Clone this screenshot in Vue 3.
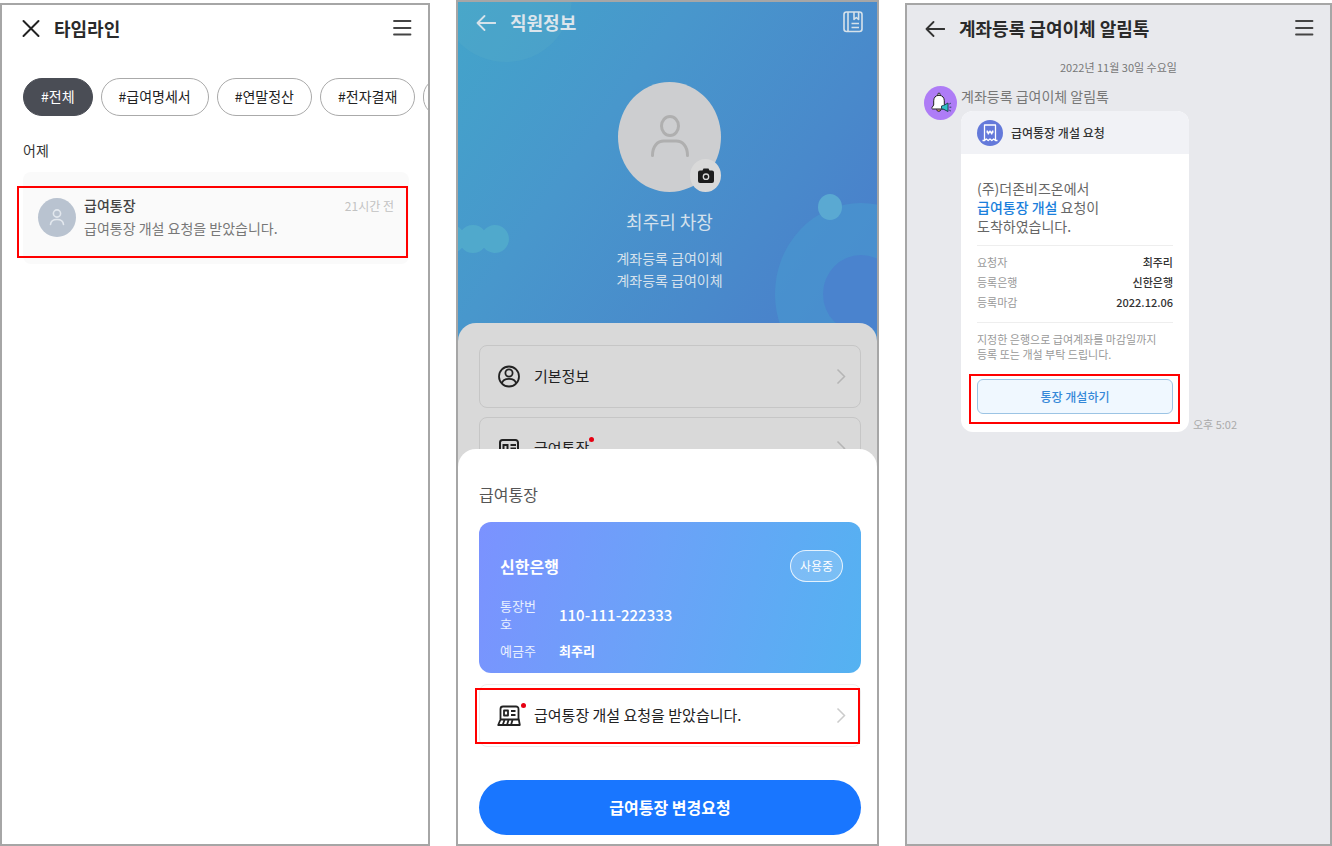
<script setup>
import { ref } from 'vue';

const tags = ['#전체', '#급여명세서', '#연말정산', '#전자결재'];
const activeTag = ref('#전체');

const departments = ['계좌등록 급여이체', '계좌등록 급여이체'];

const requestInfo = [
  { label: '요청자', value: '최주리' },
  { label: '등록은행', value: '신한은행' },
  { label: '등록마감', value: '2022.12.06' }
];

function selectTag(tag) {
  activeTag.value = tag;
}
</script>

<template>
  <div class="screens">
    <!-- 타임라인 -->
    <section class="screen">
      <header class="top-bar">
        <button class="icon-button" aria-label="닫기">
          <svg width="20" height="20" viewBox="0 0 20 20" fill="none" stroke="#222" stroke-width="2" stroke-linecap="round">
            <path d="M3.500 3 18.500 18M18.500 3 3.500 18" />
          </svg>
        </button>
        <h1>타임라인</h1>
        <button class="icon-button" aria-label="메뉴">
          <svg width="20" height="20" viewBox="0 0 20 20" fill="none" stroke="#444" stroke-width="1.800" stroke-linecap="round">
            <path d="M2 3h16.500M2 10h16.500M2 16.500h16.500" />
          </svg>
        </button>
      </header>

      <nav class="tags">
        <button
          v-for="tag in tags"
          :key="tag"
          class="tag"
          :class="{ active: tag === activeTag }"
          @click="selectTag(tag)"
        >{{ tag }}</button>
        <button class="tag" aria-label="더보기"></button>
      </nav>

      <h2 class="day">어제</h2>

      <article class="notice">
        <span class="notice-avatar">
          <svg width="18" height="20" viewBox="0 0 18 20" fill="none" stroke="#e3e8ee" stroke-width="1.6" stroke-linecap="round">
            <circle cx="9" cy="6.500" r="3.600" />
            <path d="M2.500 17.500c.3-3.800 3-5 6.500-5s6.200 1.200 6.500 5" />
          </svg>
        </span>
        <div class="notice-text">
          <strong>급여통장</strong>
          <p>급여통장 개설 요청을 받았습니다.</p>
        </div>
        <time>21시간 전</time>
        <span class="mark notice-mark"></span>
      </article>
    </section>

    <!-- 직원정보 -->
    <section class="screen employee">
      <div class="hero">
        <svg class="hero-art" viewBox="0 0 419 341" preserveAspectRatio="xMidYMin slice">
          <circle cx="48" cy="-6" r="66" fill="#5cb0c8" opacity=".25" />
          <path d="M-7 223a14 14 0 0 1 11 5.300 14 14 0 0 1 22 0 14 14 0 1 1 0 17.400 14 14 0 0 1-22 0 14 14 0 0 1-11 5.300z" fill="#50a9cc" />
          <ellipse cx="403" cy="292" rx="86" ry="91" fill="#4896cf" opacity=".7" />
          <ellipse cx="403" cy="292" rx="38" ry="39" fill="#4a83ce" />
          <ellipse cx="372" cy="205" rx="12" ry="13" fill="#5aa9d2" />
        </svg>

        <header class="top-bar">
          <button class="icon-button" aria-label="뒤로">
            <svg width="20" height="20" viewBox="0 0 20 20" fill="none" stroke="#d6e2ea" stroke-width="1.800" stroke-linecap="round" stroke-linejoin="round">
              <path d="M8.500 4 1.500 11l7 7M1.500 11h18" />
            </svg>
          </button>
          <h1>직원정보</h1>
          <button class="icon-button" aria-label="수첩">
            <svg width="20" height="22" viewBox="0 0 20 22" fill="none" stroke="#d6e2ea" stroke-width="1.600" stroke-linejoin="round">
              <rect x="1" y="1" width="18" height="19.500" rx="2.500" />
              <path d="M5 1v19.500M11 1v7.500l2.300-2 2.300 2V1M8.500 12.500h7.500M8.500 16.500h7.500" />
            </svg>
          </button>
        </header>

        <div class="profile">
          <div class="photo">
            <svg width="42" height="44" viewBox="0 0 42 44" fill="none" stroke="#afafaf" stroke-width="3" stroke-linecap="round">
              <ellipse cx="21" cy="11" rx="8.500" ry="9.500" />
              <path d="M3.500 40.500C3.500 31 8.500 26 15 26h12c6.500 0 11.500 5 11.500 14.500" />
            </svg>
            <button class="camera" aria-label="사진 변경">
              <svg width="18" height="16" viewBox="0 0 18 16">
                <path d="M3 2.500h2.500L6.500.5h5l1 2H15a2 2 0 0 1 2 2V13a2 2 0 0 1-2 2H3a2 2 0 0 1-2-2V4.500a2 2 0 0 1 2-2z" fill="#1d1d1d" />
                <circle cx="9" cy="8.700" r="2.700" fill="none" stroke="#d9d9d9" stroke-width="1.300" />
              </svg>
            </button>
          </div>
          <p class="name">최주리 차장</p>
          <p v-for="(dept, i) in departments" :key="i" class="dept">{{ dept }}</p>
        </div>
      </div>

      <div class="menu-sheet">
        <button class="menu-row">
          <svg class="row-icon" width="24" height="24" viewBox="0 0 24 24" fill="none" stroke="#222" stroke-width="1.800">
            <circle cx="12" cy="12.500" r="10" />
            <circle cx="12" cy="9" r="3.600" />
            <path d="M4.800 19.500c.8-3.300 3.400-4.600 7.200-4.600s6.400 1.300 7.200 4.600" />
          </svg>
          <span>기본정보</span>
          <svg class="chevron" width="10" height="16" viewBox="0 0 10 16" fill="none" stroke="#b5b5b5" stroke-width="1.500">
            <path d="m1.500 1.500 7 7-7 7" />
          </svg>
        </button>
        <button class="menu-row">
          <svg class="row-icon" width="24" height="24" viewBox="0 0 24 24" fill="none" stroke="#222" stroke-width="2">
            <path d="M3 21V6.500A2.500 2.500 0 0 1 5.500 4h13A2.500 2.500 0 0 1 21 6.500V21" />
            <path d="M6.500 9h4v5h-4zM13.500 9H19M13.500 12.500H19" />
          </svg>
          <span class="dotted">급여통장<i class="dot"></i></span>
          <svg class="chevron" width="10" height="16" viewBox="0 0 10 16" fill="none" stroke="#b5b5b5" stroke-width="1.500">
            <path d="m1.500 1.500 7 7-7 7" />
          </svg>
        </button>
      </div>

      <div class="account-sheet">
        <h2>급여통장</h2>
        <div class="bank-card">
          <div class="bank-head">
            <strong>신한은행</strong>
            <span class="status">사용중</span>
          </div>
          <dl>
            <dt>통장번호</dt>
            <dd class="number">110-111-222333</dd>
            <dt>예금주</dt>
            <dd>최주리</dd>
          </dl>
        </div>

        <button class="menu-row request">
          <span class="row-icon dotted">
            <svg width="24" height="24" viewBox="0 0 24 24" fill="none" stroke="#222" stroke-width="1.800" stroke-linejoin="round">
              <path d="M3.500 16V6A2.500 2.500 0 0 1 6 3.500h13A2.500 2.500 0 0 1 21.500 6v10" />
              <path d="M3.500 16.500h18.300l1 5.500H1.200zM7 7.500h4v5H7zM14 8h4.500M14 12h4.500M7.500 17l-1.800 5M11.500 17l-1.500 5M15.500 17 14 22" />
            </svg>
            <i class="dot"></i>
          </span>
          <span>급여통장 개설 요청을 받았습니다.</span>
          <svg class="chevron" width="10" height="16" viewBox="0 0 10 16" fill="none" stroke="#ccc" stroke-width="1.500">
            <path d="m1.500 1.500 7 7-7 7" />
          </svg>
          <span class="mark request-mark"></span>
        </button>

        <button class="primary">급여통장 변경요청</button>
      </div>
    </section>

    <!-- 알림톡 -->
    <section class="screen chat">
      <header class="top-bar">
        <button class="icon-button" aria-label="뒤로">
          <svg width="20" height="20" viewBox="0 0 20 20" fill="none" stroke="#333" stroke-width="1.800" stroke-linecap="round" stroke-linejoin="round">
            <path d="M8.500 4 1.500 11l7 7M1.500 11h18" />
          </svg>
        </button>
        <h1>계좌등록 급여이체 알림톡</h1>
        <button class="icon-button" aria-label="메뉴">
          <svg width="20" height="20" viewBox="0 0 20 20" fill="none" stroke="#444" stroke-width="1.800" stroke-linecap="round">
            <path d="M2 3h16.500M2 10h16.500M2 16.500h16.500" />
          </svg>
        </button>
      </header>

      <p class="date">2022년 11월 30일 수요일</p>

      <div class="message">
        <span class="sender-avatar">
          <svg width="22" height="22" viewBox="0 0 22 22" stroke-linejoin="round">
            <path d="M6.500 17.500a2.300 2.300 0 0 0 4.500 0" fill="#e6a84a" stroke="#222" />
            <path d="M9 3.300c3.600 0 5.300 2.500 5.300 5.500v4.200l1.700 2.500c.4.800 0 1.500-.8 1.500H2.800c-.8 0-1.200-.7-.8-1.500L3.700 13V8.800c0-3 1.700-5.500 5.300-5.500z" fill="#fff" stroke="#222" />
            <circle cx="9" cy="2.300" r="1.200" fill="#fff" stroke="#222" />
            <path d="m11.500 14 2-.5 4.500-2.500v8.500l-4.500-2.300-2-.4z" fill="#2fc0c6" stroke="#245" />
            <path d="m19.300 12 1.500-.8M19.500 15.200h1.800M19.300 18.200l1.500.8" stroke="#245" fill="none" />
          </svg>
        </span>
        <div class="message-body">
          <p class="sender">계좌등록 급여이체 알림톡</p>
          <div class="bubble-row">
            <article class="bubble">
              <header class="bubble-head">
                <span class="slip">
                  <svg width="16" height="18" viewBox="0 0 16 18" fill="none" stroke="#fff" stroke-width="1.300" stroke-linejoin="round">
                    <path d="M2.500 1h11v15.500l-1.800-1.500-1.900 1.500L8 15l-1.800 1.500L4.300 15l-1.800 1.500zM.5 16.500h2M13.500 16.500h2" />
                    <path d="m5 6.500 1.300 3.500L8 7l1.700 3L11 6.500M4.500 8.200h7" />
                  </svg>
                </span>
                <strong>급여통장 개설 요청</strong>
              </header>
              <div class="bubble-content">
                <p class="lead">(주)더존비즈온에서<br /><em>급여통장 개설</em> 요청이<br />도착하였습니다.</p>
                <dl class="info">
                  <div v-for="item in requestInfo" :key="item.label">
                    <dt>{{ item.label }}</dt>
                    <dd>{{ item.value }}</dd>
                  </div>
                </dl>
                <p class="guide">지정한 은행으로 급여계좌를 마감일까지<br />등록 또는 개설 부탁 드립니다.</p>
                <button class="open-account">통장 개설하기<span class="mark open-mark"></span></button>
              </div>
            </article>
            <time>오후 5:02</time>
          </div>
        </div>
      </div>
    </section>
  </div>
</template>

<style>
body {
  background: #fff;
}
</style>

<style scoped>
.screens {
  display: grid;
  grid-template-columns: 430fr 423fr 427fr;
  column-gap: 26px;
  min-height: 100vh;
  font-family: "Noto Sans CJK KR", sans-serif;
  color: #333;
}

.screens,
.screens * {
  box-sizing: border-box;
}

h1,
h2,
p,
dl,
dd {
  margin: 0;
}

button {
  padding: 0;
  font-family: inherit;
  color: inherit;
  background: none;
  border: none;
  cursor: pointer;
}

svg {
  display: block;
}

.screen {
  display: flex;
  flex-direction: column;
  min-width: 0;
  margin-top: 3px;
  overflow: hidden;
  background: #fff;
  border: 2px solid #a6a6a6;
}

.top-bar {
  display: flex;
  flex-shrink: 0;
  align-items: center;
  gap: 14px;
  height: 46px;
  padding: 0 16px 0 18px;
}

.top-bar h1 {
  flex: 1;
  font-size: 18px;
  font-weight: 700;
  line-height: 26px;
  color: #2a2a2a;
}

.mark {
  position: absolute;
  border: 2px solid #f00;
  pointer-events: none;
}

/* 타임라인 */
.tags {
  display: flex;
  gap: 8px;
  margin-top: 27px;
  padding-left: 21px;
  overflow: hidden;
}

.tag {
  flex-shrink: 0;
  height: 38px;
  padding: 0 17px 2px;
  font-size: 14px;
  line-height: 20px;
  color: #222;
  background: #fff;
  border: 1px solid #aaa;
  border-radius: 19px;
}

.tag.active {
  color: #fff;
  background: #4a4d55;
  border-color: #4a4d55;
}

.day {
  margin: 24px 21px 0;
  font-size: 14px;
  font-weight: 400;
  line-height: 20px;
}

.notice {
  position: relative;
  display: flex;
  align-items: center;
  gap: 8px;
  margin: 12px 19px 0 21px;
  padding: 22px 15px 24px;
  background: #fafafa;
  border-radius: 8px;
}

.notice-avatar {
  display: flex;
  align-items: center;
  justify-content: center;
  width: 38px;
  height: 39px;
  background: #b9c3d0;
  border-radius: 50%;
}

.notice-text {
  flex: 1;
  font-size: 14px;
  line-height: 23px;
  color: #777;
}

.notice-text strong {
  display: block;
  font-weight: 500;
  color: #444;
}

.notice time {
  align-self: flex-start;
  font-size: 12px;
  line-height: 23px;
  color: #c2c2c2;
}

.notice-mark {
  top: 14px;
  right: 1px;
  bottom: 6px;
  left: -6px;
}

/* 직원정보 */
.employee {
  margin-top: 0;
}

.hero {
  position: relative;
  padding-bottom: 52px;
  background: linear-gradient(125deg, #43a4ca 0%, #4897cc 35%, #4989cb 70%, #4a7bcb 100%);
}

.hero-art {
  position: absolute;
  width: 100%;
  height: 100%;
}

.hero .top-bar {
  position: relative;
  height: 40px;
  padding-right: 14px;
}

.hero h1 {
  color: #dce5ec;
}

.profile {
  position: relative;
  display: flex;
  flex-direction: column;
  align-items: center;
  margin-top: 40px;
  padding-left: 4px;
  color: #d5e1ec;
}

.photo {
  position: relative;
  display: flex;
  align-items: center;
  justify-content: center;
  width: 103px;
  height: 110px;
  background: #cdced0;
  border-radius: 50%;
}

.camera {
  position: absolute;
  right: 0;
  bottom: 0;
  display: flex;
  align-items: center;
  justify-content: center;
  width: 31px;
  height: 33px;
  background: #d9d9d9;
  border-radius: 50%;
}

.name {
  margin: 16px 0 13px;
  font-size: 18px;
  line-height: 26px;
}

.dept {
  font-size: 14px;
  line-height: 22px;
}

.menu-sheet {
  position: relative;
  display: flex;
  flex-direction: column;
  gap: 9px;
  margin-top: -20px;
  padding: 22px 16px 0 21px;
  background: #d9d9d9;
  border-radius: 18px 18px 0 0;
}

.menu-row {
  position: relative;
  display: flex;
  align-items: center;
  gap: 13px;
  height: 63px;
  padding: 0 14px 2px 17px;
  font-size: 15px;
  line-height: 22px;
  color: #222;
  border: 1px solid #c6c6c6;
  border-radius: 8px;
}

.chevron {
  margin-left: auto;
}

.dotted {
  position: relative;
}

.dot {
  position: absolute;
  top: 0;
  right: -5px;
  width: 5px;
  height: 5px;
  background: #e60012;
  border-radius: 50%;
}

.account-sheet {
  position: relative;
  display: flex;
  flex: 1;
  flex-direction: column;
  margin-top: -31px;
  padding: 33px 16px 9px 21px;
  background: #fff;
  border-radius: 18px 18px 0 0;
}

.account-sheet h2 {
  font-size: 16px;
  font-weight: 400;
  line-height: 24px;
  color: #555;
}

.bank-card {
  margin-top: 16px;
  padding: 28px 18px 13px 21px;
  color: #fff;
  background: linear-gradient(105deg, #7b92ff 0%, #6ba2f8 45%, #54b2f1 100%);
  border-radius: 12px;
}

.bank-head {
  display: flex;
  align-items: center;
  justify-content: space-between;
}

.bank-head strong {
  font-size: 16px;
  font-weight: 700;
  line-height: 24px;
}

.status {
  padding: 0 9px;
  font-size: 12px;
  line-height: 30px;
  background: rgba(255, 255, 255, 0.2);
  border: 1px solid rgba(255, 255, 255, 0.8);
  border-radius: 16px;
}

.bank-card dl {
  display: grid;
  grid-template-columns: 40px 1fr;
  gap: 9px 19px;
  align-items: center;
  margin-top: 15px;
  font-size: 13px;
  line-height: 18px;
}

.bank-card dt {
  color: #e8f0ff;
}

.bank-card dd {
  font-weight: 700;
}

.bank-card .number {
  font-size: 15px;
  font-weight: 500;
}

.request {
  margin-top: 11px;
  border-color: #eee;
}

.request-mark {
  top: 3px;
  right: 0;
  bottom: 2px;
  left: -5px;
}

.primary {
  height: 55px;
  margin-top: 33px;
  padding-bottom: 2px;
  font-size: 16px;
  font-weight: 700;
  line-height: 24px;
  color: #fff;
  background: #1976ff;
  border-radius: 28px;
}

/* 알림톡 */
.chat {
  background: #e8e9ed;
}

.date {
  margin-top: 7px;
  font-size: 11px;
  line-height: 18px;
  color: #777;
  text-align: center;
}

.message {
  display: flex;
  gap: 4px;
  margin-top: 10px;
  padding-left: 17px;
}

.sender-avatar {
  display: flex;
  flex-shrink: 0;
  align-items: center;
  justify-content: center;
  width: 33px;
  height: 34px;
  background: #ae7cf6;
  border-radius: 50%;
}

.sender {
  margin-bottom: 5px;
  font-size: 14px;
  line-height: 20px;
  color: #777;
}

.bubble-row {
  display: flex;
  align-items: flex-end;
  gap: 4px;
}

.bubble-row time {
  font-size: 11px;
  line-height: 16px;
  color: #aaa;
}

.bubble {
  width: 228px;
  overflow: hidden;
  background: #fff;
  border-radius: 12px;
}

.bubble-head {
  display: flex;
  align-items: center;
  gap: 8px;
  height: 43px;
  padding: 0 16px;
  background: #f1f2f6;
}

.bubble-head strong {
  font-size: 12px;
  font-weight: 500;
  line-height: 20px;
}

.slip {
  display: flex;
  align-items: center;
  justify-content: center;
  width: 26px;
  height: 26px;
  background: #6379da;
  border-radius: 50%;
}

.bubble-content {
  display: flex;
  flex-direction: column;
  padding: 25px 16px 18px;
}

.lead {
  font-size: 14px;
  line-height: 19px;
  color: #666;
}

.lead em {
  font-style: normal;
  font-weight: 500;
  color: #1b7fdc;
}

.info {
  margin: 9px 0;
  padding: 6px 0 10px;
  font-size: 11px;
  line-height: 20px;
  border-top: 1px solid #eee;
  border-bottom: 1px solid #eee;
}

.info div {
  display: flex;
  justify-content: space-between;
}

.info dt {
  color: #999;
}

.info dd {
  font-weight: 500;
  color: #333;
}

.guide {
  font-size: 11px;
  line-height: 15px;
  color: #999;
}

.open-account {
  position: relative;
  height: 35px;
  margin-top: 17px;
  font-size: 12px;
  font-weight: 500;
  line-height: 18px;
  color: #3588d8;
  background: #f0f8ff;
  border: 1px solid #9cc4e4;
  border-radius: 6px;
}

.open-mark {
  top: -6px;
  right: -8px;
  bottom: -11px;
  left: -9px;
}
</style>
